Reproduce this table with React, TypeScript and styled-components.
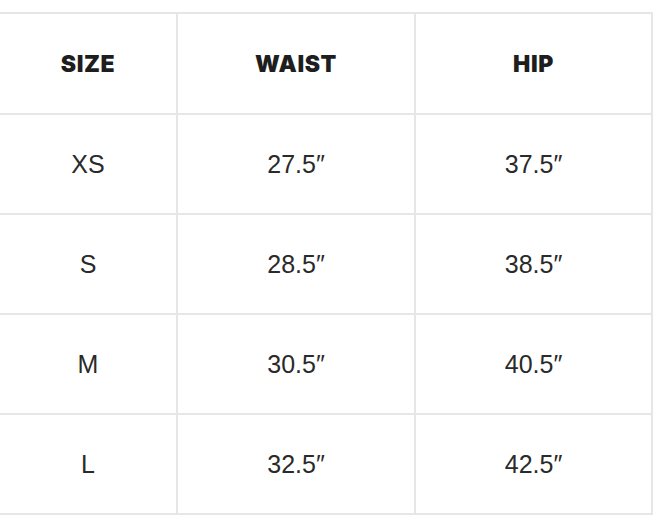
import React from "react";
import styled, { createGlobalStyle } from "styled-components";

const Global = createGlobalStyle`
  html, body { margin: 0; padding: 0; background: #fff; }
`;

const Wrap = styled.div`
  padding-top: 12px;
`;

const Table = styled.table`
  border-collapse: separate;
  border-spacing: 0;
  border-top: 2px solid #e6e6e6;
  table-layout: fixed;
  width: 653px;
`;

const Cell = styled.td<{ $w: number; $head?: boolean }>`
  width: ${(p) => p.$w}px;
  height: ${(p) => (p.$head ? 99 : 98)}px;
  padding: 0;
  box-sizing: content-box;
  border-right: 2px solid #e6e6e6;
  border-bottom: 2px solid #e6e6e6;
  text-align: center;
  vertical-align: middle;
  color: ${(p) => (p.$head ? "#1e1e1e" : "#2a2a2a")};
  font-family: ${(p) => (p.$head ? '"Inter", "Lato", sans-serif' : '"Liberation Sans", Arial, sans-serif')};
  font-weight: ${(p) => (p.$head ? 900 : 400)};
  font-size: ${(p) => (p.$head ? "23px" : "25px")};
  letter-spacing: ${(p) => (p.$head ? "0.6px" : "0")};
`;

const widths = [176, 236, 235];
const head = ["SIZE", "WAIST", "HIP"];
const rows = [
  ["XS", "27.5″", "37.5″"],
  ["S", "28.5″", "38.5″"],
  ["M", "30.5″", "40.5″"],
  ["L", "32.5″", "42.5″"],
];

export default function App() {
  return (
    <Wrap>
      <Global />
      <Table>
        <thead>
          <tr>
            {head.map((h, i) => (
              <Cell as="th" key={h} $w={widths[i]} $head>
                {h}
              </Cell>
            ))}
          </tr>
        </thead>
        <tbody>
          {rows.map((r) => (
            <tr key={r[0]}>
              {r.map((c, i) => (
                <Cell key={i} $w={widths[i]}>
                  {c}
                </Cell>
              ))}
            </tr>
          ))}
        </tbody>
      </Table>
    </Wrap>
  );
}
